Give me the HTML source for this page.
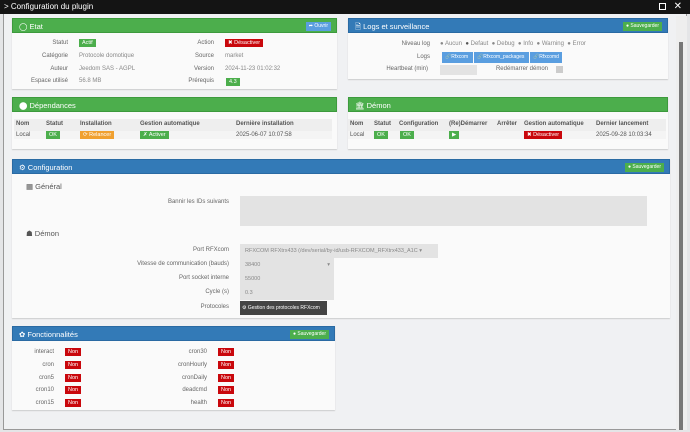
<!DOCTYPE html><html><head><style>
*{box-sizing:border-box;margin:0;padding:0}
body{width:690px;height:432px;overflow:hidden;background:#e4e5e7;font-family:"Liberation Sans",sans-serif;font-size:6px;color:#555;position:relative}
.abs{position:absolute;white-space:nowrap}
.top{left:0;top:0;width:690px;height:14px;background:#141414;color:#fff;font-size:8px;line-height:14px;padding-left:4px}
.dlg{left:3px;top:14px;width:684px;height:416px;background:#f0f1f3;border:1px solid #999;border-top:0}
.panel{position:absolute;background:#fafafa;box-shadow:0 1px 1px #ccc}
.hd{height:15px;color:#fff;font-size:7.5px;line-height:15px;padding-left:6px;position:relative}
.g{background:#4cae4c;border:1px solid #3d9a3d}.b{background:#337ab7;border:1px solid #2a6aa3}
.btn{position:absolute;font-size:5px;color:#fff;padding:0 3px;height:9px;line-height:9px;white-space:nowrap}
.lbl{position:absolute;text-align:right;color:#666;white-space:nowrap}
.val{position:absolute;color:#888;white-space:nowrap}
.tag{position:absolute;color:#fff;font-size:5.5px;line-height:8px;height:8px;padding:0 3px;white-space:nowrap}
.gr{background:#4cae4c}.rd{background:#c9070c}.or{background:#f0a030}.lb{background:#5a9ee0}
.inp{position:absolute;background:#e3e3e3;color:#888;font-size:5.5px;padding-left:5px;line-height:14px;white-space:nowrap;overflow:hidden}
</style></head><body>
<div class="abs top">&gt; Configuration du plugin<span style="position:absolute;right:24px;top:3px;width:7px;height:7px;border:1px solid #fff"></span><span style="position:absolute;right:8px;top:0;font-size:10px">✕</span></div>
<div class="abs dlg"></div>
<div class="abs" style="left:676px;top:16px;width:11px;height:414px;background:#eee"></div>
<div class="abs" style="left:679px;top:42px;width:4px;height:388px;background:#777"></div>

<div class="panel" style="left:12px;top:18px;width:325px;height:71px">
<div class="hd g">◯ Etat<span class="btn lb" style="right:5px;top:3px">➦ Ouvrir</span></div>
<div class="lbl" style="left:0;width:56px;top:22px">Statut</div><span class="tag gr" style="left:67px;top:21px">Actif</span>
<div class="lbl" style="left:0;width:56px;top:35px">Catégorie</div><div class="val" style="left:67px;top:35px">Protocole domotique</div>
<div class="lbl" style="left:0;width:56px;top:48px">Auteur</div><div class="val" style="left:67px;top:48px">Jeedom SAS - AGPL</div>
<div class="lbl" style="left:0;width:56px;top:60px">Espace utilisé</div><div class="val" style="left:67px;top:60px">56.8 MB</div>
<div class="lbl" style="left:150px;width:52px;top:22px">Action</div><span class="tag rd" style="left:213px;top:21px">✖ Désactiver</span>
<div class="lbl" style="left:150px;width:52px;top:35px">Source</div><div class="val" style="left:213px;top:35px">market</div>
<div class="lbl" style="left:150px;width:52px;top:48px">Version</div><div class="val" style="left:213px;top:48px">2024-11-23 01:02:32</div>
<div class="lbl" style="left:150px;width:52px;top:60px">Prérequis</div><span class="tag gr" style="left:214px;top:60px">4.3</span>
</div>

<div class="panel" style="left:348px;top:18px;width:320px;height:61px">
<div class="hd b">🗎 Logs et surveillance<span class="btn gr" style="right:5px;top:3px">● Sauvegarder</span></div>
<div class="lbl" style="left:0;width:82px;top:23px">Niveau log</div>
<div class="val" style="left:92px;top:23px;color:#888">● Aucun &nbsp;<span style="color:#555">●</span> Defaut &nbsp;● Debug &nbsp;● Info &nbsp;● Warning &nbsp;● Error</div>
<div class="lbl" style="left:0;width:82px;top:36px">Logs</div>
<span class="tag lb" style="left:94px;top:34px;height:11px;line-height:11px;width:31px;font-size:5px">🔗Rfxcom</span>
<span class="tag lb" style="left:126px;top:34px;height:11px;line-height:11px;width:55px;font-size:5px">🔗Rfxcom_packages</span>
<span class="tag lb" style="left:182px;top:34px;height:11px;line-height:11px;width:32px;font-size:5px">🔗Rfxcomd</span>
<div class="lbl" style="left:0;width:80px;top:48px">Heartbeat (min)</div>
<div class="inp" style="left:92px;top:47px;width:37px;height:10px"></div>
<div class="lbl" style="left:130px;width:70px;top:48px">Redémarrer démon</div>
<div class="abs" style="left:208px;top:48px;width:7px;height:7px;background:#ccc"></div>
</div>

<div class="panel" style="left:12px;top:97px;width:325px;height:52px">
<div class="hd g">⬤ Dépendances</div>
<div class="abs" style="left:2px;top:22px;width:318px;height:20px;background:#eee"></div>
<div class="abs" style="left:2px;top:34px;width:318px;height:8px;background:#f4f4f4"></div>
<div class="abs" style="left:4px;top:24px;font-weight:bold">Nom</div><div class="abs" style="left:34px;top:24px;font-weight:bold">Statut</div><div class="abs" style="left:68px;top:24px;font-weight:bold">Installation</div><div class="abs" style="left:128px;top:24px;font-weight:bold">Gestion automatique</div><div class="abs" style="left:224px;top:24px;font-weight:bold">Dernière installation</div>
<div class="abs" style="left:4px;top:35px">Local</div><span class="tag gr" style="left:34px;top:34px">OK</span><span class="tag or" style="left:68px;top:34px">⟳ Relancer</span><span class="tag gr" style="left:128px;top:34px">✗ Activer</span><div class="abs" style="left:224px;top:35px">2025-06-07 10:07:58</div>
</div>

<div class="panel" style="left:348px;top:97px;width:320px;height:52px">
<div class="hd g">🏛 Démon</div>
<div class="abs" style="left:0;top:22px;width:318px;height:20px;background:#eee"></div>
<div class="abs" style="left:0;top:34px;width:318px;height:8px;background:#f4f4f4"></div>
<div class="abs" style="left:2px;top:24px;font-weight:bold">Nom</div><div class="abs" style="left:26px;top:24px;font-weight:bold">Statut</div><div class="abs" style="left:51px;top:24px;font-weight:bold">Configuration</div><div class="abs" style="left:101px;top:24px;font-weight:bold">(Re)Démarrer</div><div class="abs" style="left:149px;top:24px;font-weight:bold">Arrêter</div><div class="abs" style="left:176px;top:24px;font-weight:bold">Gestion automatique</div><div class="abs" style="left:248px;top:24px;font-weight:bold">Dernier lancement</div>
<div class="abs" style="left:2px;top:35px">Local</div><span class="tag gr" style="left:26px;top:34px">OK</span><span class="tag gr" style="left:52px;top:34px">OK</span><span class="tag gr" style="left:101px;top:34px">▶</span><span class="tag rd" style="left:176px;top:34px">✖ Désactiver</span><div class="abs" style="left:248px;top:35px">2025-09-28 10:03:34</div>
</div>

<div class="panel" style="left:12px;top:159px;width:658px;height:159px">
<div class="hd b">⚙ Configuration<span class="btn gr" style="right:5px;top:3px">● Sauvegarder</span></div>
<div class="abs" style="left:14px;top:23px;font-size:7.5px;color:#555">▦ Général</div>
<div class="lbl" style="left:100px;width:117px;top:40px">Bannir les IDs suivants</div>
<div class="inp" style="left:228px;top:37px;width:407px;height:30px"></div>
<div class="abs" style="left:14px;top:70px;font-size:7.5px;color:#555">☗ Démon</div>
<div class="lbl" style="left:100px;width:117px;top:88px">Port RFXcom</div>
<div class="inp" style="left:228px;top:85px;width:198px;height:14px">RFXCOM RFXtrx433 (/dev/serial/by-id/usb-RFXCOM_RFXtrx433_A1C ▾</div>
<div class="lbl" style="left:80px;width:137px;top:102px">Vitesse de communication (bauds)</div>
<div class="inp" style="left:228px;top:99px;width:94px;height:14px">38400<span style="position:absolute;right:4px">▾</span></div>
<div class="lbl" style="left:100px;width:117px;top:116px">Port socket interne</div>
<div class="inp" style="left:228px;top:113px;width:94px;height:14px">55000</div>
<div class="lbl" style="left:100px;width:117px;top:130px">Cycle (s)</div>
<div class="inp" style="left:228px;top:127px;width:94px;height:14px">0.3</div>
<div class="lbl" style="left:100px;width:117px;top:145px">Protocoles</div>
<div class="abs" style="left:228px;top:142px;width:87px;height:14px;background:#444;color:#fff;font-size:5px;line-height:14px;padding-left:2px">⚙ Gestion des protocoles RFXcom</div>
</div>

<div class="panel" style="left:12px;top:326px;width:323px;height:84px">
<div class="hd b">✿ Fonctionnalités<span class="btn gr" style="right:5px;top:3px">● Sauvegarder</span></div>
<div class="lbl" style="left:0;width:42px;top:23px">interact</div><span class="tag rd" style="left:53px;top:22px">Non</span>
<div class="lbl" style="left:0;width:42px;top:36px">cron</div><span class="tag rd" style="left:53px;top:35px">Non</span>
<div class="lbl" style="left:0;width:42px;top:49px">cron5</div><span class="tag rd" style="left:53px;top:48px">Non</span>
<div class="lbl" style="left:0;width:42px;top:61px">cron10</div><span class="tag rd" style="left:53px;top:60px">Non</span>
<div class="lbl" style="left:0;width:42px;top:74px">cron15</div><span class="tag rd" style="left:53px;top:73px">Non</span>
<div class="lbl" style="left:140px;width:55px;top:23px">cron30</div><span class="tag rd" style="left:206px;top:22px">Non</span>
<div class="lbl" style="left:140px;width:55px;top:36px">cronHourly</div><span class="tag rd" style="left:206px;top:35px">Non</span>
<div class="lbl" style="left:140px;width:55px;top:49px">cronDaily</div><span class="tag rd" style="left:206px;top:48px">Non</span>
<div class="lbl" style="left:140px;width:55px;top:61px">deadcmd</div><span class="tag rd" style="left:206px;top:60px">Non</span>
<div class="lbl" style="left:140px;width:55px;top:74px">health</div><span class="tag rd" style="left:206px;top:73px">Non</span>
</div>
</body></html>
